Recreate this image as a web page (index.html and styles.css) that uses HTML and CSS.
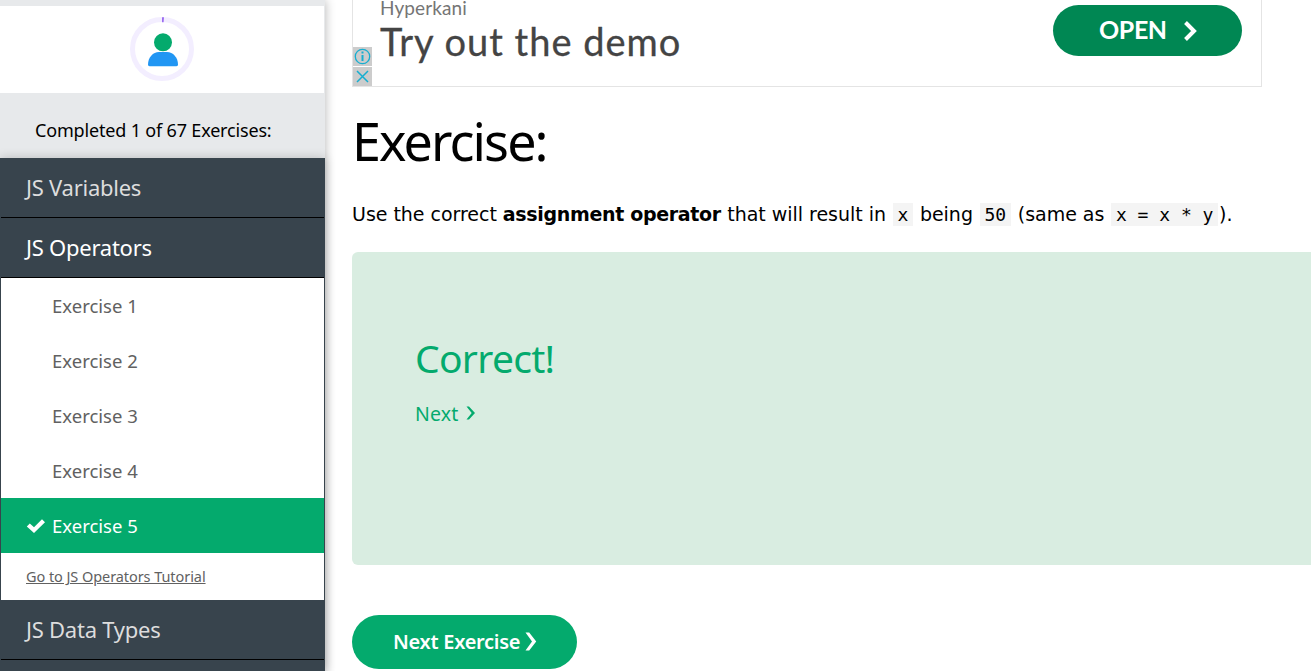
FILE: index.html
```html
<!DOCTYPE html>
<html lang="en">
<head>
<meta charset="utf-8">
<title>JavaScript Exercises</title>
<link rel="stylesheet" href="styles.css">
</head>
<body>
<div class="page">
  <aside class="sidebar">
    <div class="profile">
      <svg width="66" height="66" viewBox="0 0 66 66">
        <circle cx="33" cy="33" r="29.500" fill="none" stroke="#f3eeff" stroke-width="5"/>
        <path d="M33 1.200v5h1.600l.4-5z" fill="#9b6cf0"/>
        <circle cx="34" cy="26.300" r="9" fill="#04aa6d"/>
        <path d="M19 48.500c0-7 5-12.500 11-12.500h8c6 0 11 5.500 11 12.500 0 1.200-.6 1.700-1.600 1.700H20.600c-1 0-1.600-.5-1.600-1.700z" fill="#2196f3"/>
      </svg>
    </div>
    <div class="progress"><span>Completed 1 of 67 Exercises:</span></div>
    <nav class="menu">
      <a class="topic">JS Variables</a>
      <a class="topic open">JS Operators</a>
      <div class="exercises">
        <a class="exercise">Exercise 1</a>
        <a class="exercise">Exercise 2</a>
        <a class="exercise">Exercise 3</a>
        <a class="exercise">Exercise 4</a>
        <a class="exercise current"><svg class="check" width="20" height="16" viewBox="0 0 20 16"><path d="M.8 8.500 3.800 5.500l4.200 3.700L16 1.300l3 2.900L8 15z" fill="#fff"/></svg>Exercise 5</a>
        <a class="tutorial">Go to JS Operators Tutorial</a>
      </div>
      <a class="topic">JS Data Types</a>
      <a class="topic"></a>
    </nav>
  </aside>
  <main class="content">
    <section class="ad">
      <div class="ad-controls">
        <svg width="19" height="19" viewBox="0 0 19 19"><rect width="19" height="19" fill="#ccc"/><circle cx="9.500" cy="9.500" r="7.200" fill="none" stroke="#16aed0" stroke-width="1.300"/><path d="M8.500 4.500h2v2h-2zM8.500 8h2v6h-2z" fill="#16aed0"/></svg>
        <svg width="19" height="19" viewBox="0 0 19 19"><rect width="19" height="19" fill="#ccc"/><path d="M4 4l11 11M15 4L4 15" stroke="#16aed0" stroke-width="1.500"/></svg>
      </div>
      <div class="ad-copy">
        <div class="ad-brand">Hyperkani</div>
        <div class="ad-title">Try out the demo</div>
      </div>
      <a class="ad-button"><span>OPEN</span><svg width="14" height="20" viewBox="0 0 14 20"><path d="M1.500 1.500 10 10l-8.500 8.500" fill="none" stroke="#fff" stroke-width="4"/></svg></a>
    </section>
    <h1 class="title">Exercise:</h1>
    <p class="task">Use the correct <b>assignment operator</b> that will result in <code>x</code> being <code>50</code> (same as <code>x = x * y</code>).</p>
    <section class="result">
      <h2 class="verdict">Correct!</h2>
      <a class="next-link"><span>Next</span><svg width="10" height="16" viewBox="0 0 10 16"><path d="M.5 1.500H3l6 6.500-6 6.500H.5L5.700 8z" fill="#04aa6d"/></svg></a>
    </section>
    <a class="next-button"><span>Next Exercise</span><svg width="12" height="19" viewBox="0 0 12 19"><path d="M.5.500h3.700l7 9-7 9H.5l6.500-9z" fill="#fff"/></svg></a>
  </main>
</div>
</body>
</html>
```
FILE: styles.css
```css
* { box-sizing: border-box; }
body { margin: 0; background: #fff; font-family: "Noto Sans", sans-serif; overflow: hidden; }
svg { display: block; flex: none; }
.page { display: flex; height: 671px; overflow: hidden; }
.sidebar { flex: none; width: 325px; padding-top: 6px; background: #e7e9eb; box-shadow: 0 0 10px rgba(0,0,0,.3); display: flex; flex-direction: column; }
.profile { flex: none; width: 324px; height: 87px; padding: 10px 0 0 129px; background: #fff; }
.progress { flex: none; height: 65px; padding: 24px 0 0 35px; font-size: 18px; line-height: 26px; letter-spacing: -.17px; white-space: nowrap; }
.menu { flex: none; background: #38444d; padding: 0 1px; box-shadow: 0 0 10px rgba(0,0,0,.2); }
.topic { display: block; height: 60px; padding: 0 25px; border-bottom: 1px solid #000; font-size: 22px; line-height: 58px; letter-spacing: -.25px; color: #ddd; }
.topic.open { color: #fff; }
.exercises { background: #fff; }
.exercise { display: flex; align-items: center; height: 55px; padding-left: 51px; font-size: 18.500px; color: #616161; }
.current { padding-left: 25px; gap: 6px; background: #04aa6d; color: #fff; }
.tutorial { display: block; height: 47px; padding-left: 25px; font-size: 14.500px; line-height: 47px; letter-spacing: -.07px; color: #616161; text-decoration: underline; }
.content { flex: none; width: 986px; padding-left: 27px; }
.ad { display: flex; width: 910px; height: 87px; border: 1px solid #e4e4e4; border-top: 0; }
.ad-controls { width: 19px; padding-top: 47px; display: flex; flex-direction: column; gap: 1px; }
.ad-copy { width: 681px; padding-left: 8px; color: #444; font-family: Lato, sans-serif; white-space: nowrap; }
.ad-brand { height: 19px; font-size: 19px; line-height: 15px; color: #757575; letter-spacing: .1px; }
.ad-title { margin-top: -1px; font-size: 38px; line-height: 46px; letter-spacing: 1px; -webkit-text-stroke: .3px #444; }
.ad-button { display: flex; align-items: center; gap: 17px; width: 189px; height: 51px; margin-top: 5px; padding-left: 46px; border-radius: 26px; background: #008753; color: #fff; font: bold 25px/48px Lato, sans-serif; letter-spacing: -.4px; }
.ad-button span { height: 52px; }
.title { margin: 18px 0 0; font-size: 52px; font-weight: 400; line-height: 72px; letter-spacing: -1.900px; }
.task { margin: 22px 0 0; height: 53px; font: 19px/30px "DejaVu Sans", sans-serif; white-space: nowrap; letter-spacing: -.03px; }
.task b { margin-right: .5px; letter-spacing: -.33px; }
.task code { margin: 0 .9px; padding: 1px 4.700px; background: #f4f4f4; font: 18px "DejaVu Sans Mono", monospace; letter-spacing: 0; }
.result { height: 313px; padding: 78px 63px; border-radius: 6px 0 0 6px; background: #d9ede1; color: #04aa6d; }
.verdict { margin: 0; font-size: 39px; font-weight: 400; line-height: 56px; letter-spacing: -.7px; }
.next-link { display: flex; align-items: center; gap: 7px; height: 30px; margin-top: 12px; font-size: 19.500px; letter-spacing: .2px; }
.next-button { display: flex; align-items: center; gap: 5px; width: 225px; height: 54px; margin-top: 50px; padding: 0 0 2px 41px; border-radius: 27px; background: #04aa6d; color: #fff; font-size: 20px; font-weight: 600; letter-spacing: -.28px; white-space: nowrap; }
```
